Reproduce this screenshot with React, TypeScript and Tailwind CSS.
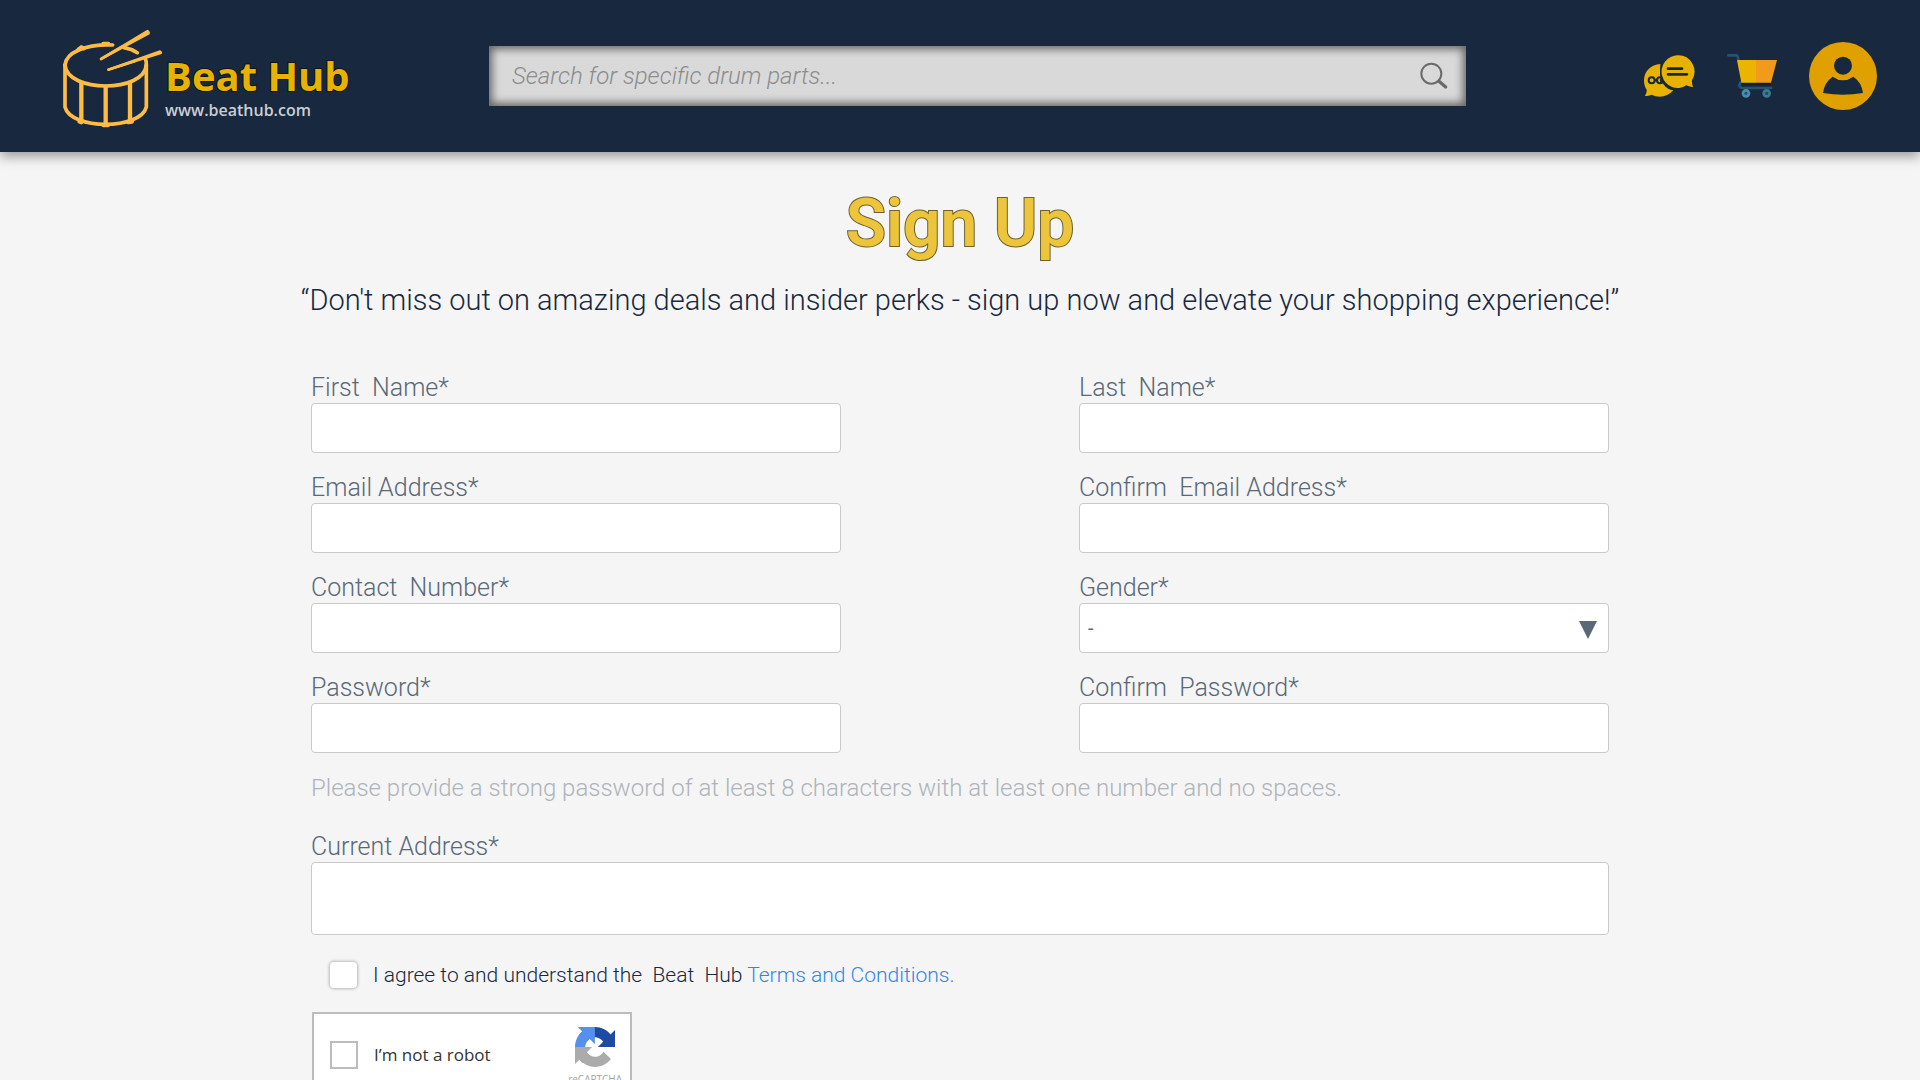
import type { InputHTMLAttributes, ReactNode } from "react";

function DrumLogo() {
  return (
    <svg viewBox="66 57 306 297" className="h-[99px] w-[102px] shrink-0" fill="none" stroke="#ffbc45" strokeWidth="11" strokeLinecap="round" aria-hidden="true">
      <path d="M75 165C78 128 135 102 218 105M252 113Q275 117 292 128M316 146Q319 152 319 165" />
      <path d="M75 165C82 249 312 249 319 165" />
      <path d="M75 165V291C92 360 302 360 319 291V165" />
      <path d="M124 220V330M197 230V344M270 220V330" strokeWidth="13" />
      <path d="M115 119L124 112L132 115M190 101H205M118 335L124 337M190 346H204M265 337L276 335" strokeWidth="12" />
      <path d="M180 145L322 59Q332 62 329 73L185 150ZM202 176L359 121Q369 124 365 132L206 182Z" fill="#ffbc45" stroke="none" />
      <path d="M183 147L245 111M205 179L285 153" strokeWidth="8" />
    </svg>
  );
}

function ChatIcon() {
  return (
    <svg viewBox="66 102 156 132" className="h-11 w-13" aria-hidden="true">
      <path d="M118 132C90 133 69 154 69 181C69 192 72 202 77 209C78 216 75 222 72 228C79 228 86 226 92 224C113 235 140 231 157 211C132 207 116 184 117 158Q117 144 118 132Z" fill="#e8b200" />
      <g fill="none" stroke="#18293f" strokeWidth="6">
        <circle cx="92" cy="181" r="9" />
        <circle cx="117" cy="181" r="9" />
        <path d="M100 181H109" />
      </g>
      <circle cx="171" cy="155" r="53" fill="#18293f" />
      <path d="M171 106A48 49 0 0 1 213 181Q212 191 216 201Q206 201 196 196A48 49 0 1 1 171 106Z" fill="#e8b200" />
      <path d="M141 146H183M141 163H198" stroke="#18293f" strokeWidth="8" strokeLinecap="round" />
      <g fill="none" stroke="#18293f" strokeWidth="6">
        <path d="M123 174A9 9 0 0 0 123 188" />
      </g>
    </svg>
  );
}

function CartIcon() {
  return (
    <svg viewBox="315 99 156 138" className="h-[46px] w-13" fill="none" aria-hidden="true">
      <path d="M322 106H346Q351 106 352 119M358 187Q350 203 364 204H450" stroke="#20576f" strokeWidth="8" strokeLinecap="round" />
      <path d="M364 192H450" stroke="#10202f" strokeWidth="7" />
      <path d="M348 120H405V188H361Z" fill="#ebb400" />
      <path d="M405 120H468L450 188H405Z" fill="#f29a1c" />
      <circle cx="375" cy="220" r="9" stroke="#4a8cab" strokeWidth="8" fill="#28506c" />
      <circle cx="437" cy="220" r="9" stroke="#3a7a98" strokeWidth="8" fill="#204a60" />
    </svg>
  );
}

function UserIcon() {
  return (
    <svg viewBox="567 66 204 204" className="size-17" aria-hidden="true">
      <circle cx="669" cy="168" r="102" fill="#e0a100" />
      <circle cx="669" cy="137" r="27" fill="#18293f" />
      <path d="M609 219Q613 187 638 170Q669 192 700 170Q725 187 729 219Q669 229 609 219Z" fill="#18293f" />
    </svg>
  );
}

function CaptchaLogo() {
  return (
    <svg viewBox="0 0 64 64" className="size-10" aria-hidden="true">
      <path fill="#1f4aa3" d="M64 31.955l-.033-1.37V4.687l-7.16 7.16C50.948 4.674 42.033.093 32.05.093c-10.4 0-19.622 4.96-25.458 12.64l11.736 11.86a15.55 15.55 0 0 1 4.754-5.334c2.05-1.6 4.952-2.906 8.968-2.906.485 0 .86.057 1.135.163 4.976.393 9.288 3.14 11.828 7.124l-8.307 8.307L64 31.953" />
      <path fill="#5590ee" d="M31.862.094l-1.37.033H4.594l7.16 7.16C4.58 13.147 0 22.06 0 32.046c0 10.4 4.96 19.622 12.64 25.458L24.5 45.768a15.55 15.55 0 0 1-5.334-4.754c-1.6-2.05-2.906-4.952-2.906-8.968 0-.485.057-.86.163-1.135.393-4.976 3.14-9.288 7.124-11.828l8.307 8.307L31.86.095" />
      <path fill="#ababab" d="M.001 32.045l.033 1.37v25.898l7.16-7.16c5.86 7.173 14.774 11.754 24.76 11.754 10.4 0 19.622-4.96 25.458-12.64l-11.736-11.86a15.55 15.55 0 0 1-4.754 5.334c-2.05 1.6-4.952 2.906-8.968 2.906-.485 0-.86-.057-1.135-.163-4.976-.393-9.288-3.14-11.828-7.124l8.307-8.307c-10.522.04-22.4.066-27.295-.005" />
    </svg>
  );
}

const box = "block w-full rounded border border-[#c9c9c9] bg-white px-2 text-[#5a6878]";

function Field({ id, label, children }: { id: string; label: string; children: ReactNode }) {
  return (
    <div>
      <label htmlFor={id} className="block text-[25px] leading-[30px] whitespace-pre text-[#5a6878]">{label}</label>
      {children}
    </div>
  );
}

function TextField({ id, label, ...rest }: { id: string; label: string } & InputHTMLAttributes<HTMLInputElement>) {
  return (
    <Field id={id} label={label}>
      <input id={id} className={`${box} h-[50px]`} {...rest} />
    </Field>
  );
}

export default function App() {
  return (
    <div className="h-screen overflow-hidden bg-[#f5f5f5] font-[Roboto,sans-serif] font-light text-[#18293f]">
      <header className="grid h-38 grid-cols-[489px_1fr_454px] items-center bg-[#18293f] shadow-[0_4px_12px_rgba(0,0,0,0.4)]">
        <a href="#home" className="flex items-center gap-px pt-1 pl-[62px]">
          <DrumLogo />
          <span className="flex flex-col pt-4 font-['Open_Sans',sans-serif]">
            <span className="text-[40px] leading-12 font-bold text-[#e8b200] [-webkit-text-stroke:2px_#0d1520] [paint-order:stroke]">Beat Hub</span>
            <span className="text-base leading-5 font-semibold text-[#cbced3]">www.beathub.com</span>
          </span>
        </a>
        <form role="search" className="flex h-15 items-center bg-[#d9d9d9] pr-[17px] pl-[23px] shadow-[inset_0_0_8px_3px_rgba(0,0,0,0.55)]">
          <input type="search" aria-label="Search drum parts" placeholder="Search for specific drum parts..." className="min-w-0 flex-1 bg-transparent text-[24px] italic outline-none placeholder:text-[#8c8c8c]" />
          <button type="button" aria-label="Search">
            <svg viewBox="118 98 88 84" className="h-7 w-[30px]" fill="none" stroke="#6b6b6b" aria-hidden="true">
              <circle cx="154" cy="133" r="30" strokeWidth="6" />
              <path d="M177 156L197 173" strokeWidth="10" strokeLinecap="round" />
            </svg>
          </button>
        </form>
        <nav className="flex items-center justify-end gap-[31px] pr-[43px]">
          <button type="button" aria-label="Messages"><ChatIcon /></button>
          <button type="button" aria-label="Cart"><CartIcon /></button>
          <button type="button" aria-label="Account"><UserIcon /></button>
        </nav>
      </header>

      <main className="px-8 pt-6">
        <h1 className="text-center text-[66px] leading-24 font-semibold text-[#ecc53b] [-webkit-text-stroke:2px_#6b5f33] [paint-order:stroke]">Sign Up</h1>
        <p className="mt-2 text-center text-[29px] leading-10">“Don't miss out on amazing deals and insider perks - sign up now and elevate your shopping experience!”</p>

        <form className="mx-auto mt-[53px] max-w-[1298px]">
          <div className="grid grid-cols-2 gap-x-[238px] gap-y-5">
            <TextField id="first" label="First  Name*" />
            <TextField id="last" label="Last  Name*" />
            <TextField id="email" label="Email Address*" type="email" />
            <TextField id="email2" label="Confirm  Email Address*" type="email" />
            <TextField id="phone" label="Contact  Number*" type="tel" />
            <Field id="gender" label="Gender*">
              <div className="relative">
                <select id="gender" className={`${box} h-[50px] appearance-none text-xl font-normal`}>
                  <option>-</option>
                  <option>Female</option>
                  <option>Male</option>
                </select>
                <svg viewBox="0 0 18 18" className="pointer-events-none absolute top-[18px] right-3 size-[18px]" aria-hidden="true">
                  <path d="M0 0H18L9 18Z" fill="#5a6878" />
                </svg>
              </div>
            </Field>
            <TextField id="password" label="Password*" type="password" />
            <TextField id="password2" label="Confirm  Password*" type="password" />
          </div>
          <p className="mt-5 mb-[29px] text-[24px] leading-[30px] text-[#adb3ba]">Please provide a strong password of at least 8 characters with at least one number and no spaces.</p>
          <Field id="address" label="Current Address*">
            <textarea id="address" className={`${box} h-[73px] resize-none`} />
          </Field>

          <div className="mt-[27px] flex items-center gap-4 pl-[19px]">
            <input id="terms" type="checkbox" className="h-[26px] w-[27px] appearance-none rounded-sm bg-white shadow-[0_0_3px_1px_rgba(0,0,0,0.25)]" />
            <p className="text-[21px] leading-[26px] whitespace-pre">
              <label htmlFor="terms">I agree to and understand the  Beat  Hub </label>
              <a href="#terms" className="text-[#2f86ea]">Terms and Conditions.</a>
            </p>
          </div>

          <div className="mt-6 ml-px flex h-[104px] w-80 items-start justify-between border-2 border-[#bcbcbc] bg-white pr-2 pl-4">
            <div className="mt-[27px] flex items-center gap-4">
              <input id="robot" type="checkbox" className="size-[28px] appearance-none border-2 border-[#bcbcbc] bg-white" />
              <label htmlFor="robot" className="font-['Open_Sans',sans-serif] text-[17px] font-normal text-[#333]">I’m not a robot</label>
            </div>
            <div className="mt-[13px] flex flex-col items-center gap-1">
              <CaptchaLogo />
              <span className="font-['Open_Sans',sans-serif] text-[10px] leading-4 font-normal text-[#a3a3a3]">reCAPTCHA</span>
            </div>
          </div>
        </form>
      </main>
    </div>
  );
}
